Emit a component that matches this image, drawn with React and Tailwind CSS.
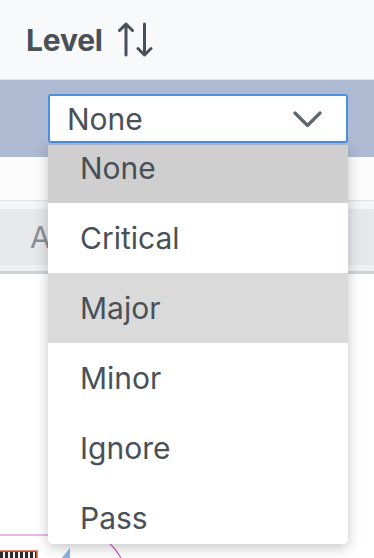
import React from "react";

const options = ["None", "Critical", "Major", "Minor", "Ignore", "Pass"];

export default function App() {
  return (
    <div
      className="relative w-[374px] h-[558px] overflow-hidden bg-white text-[#495057]"
      style={{ fontFamily: "Inter, 'Open Sans', sans-serif" }}
    >
      {/* header */}
      <div className="h-[80px] bg-[#f8f9fa] flex items-center pl-[26px] gap-[15px] border-b border-[#dee2e6]">
        <span className="text-[30px] font-bold leading-none tracking-[-0.2px]">Level</span>
        <svg width="36" height="36" viewBox="0 0 36 36" fill="none" stroke="#495057" strokeWidth="3" strokeLinecap="round" strokeLinejoin="round" className="-mt-[2px]">
          <path d="M8 3v31M1.5 9.5 8 3l6.5 6.5" />
          <path d="M26.5 3v31M20 27.5l6.5 6.5 6.5-6.5" />
        </svg>
      </div>
      {/* filter row */}
      <div className="h-[77px] bg-[#aeb9d2] pl-[48px] pt-[14px]">
        <div className="w-[300px] h-[49px] bg-white border-2 border-[#4a90e2] rounded-[3px] flex items-center justify-between pl-[17px] pr-[24px]">
          <span className="text-[30px] leading-none">None</span>
          <svg width="29" height="16" viewBox="0 0 29 16" fill="none" stroke="#5f666d" strokeWidth="3.2" strokeLinecap="round" strokeLinejoin="round">
            <path d="M2 2l12.5 12.5L27 2" />
          </svg>
        </div>
      </div>
      {/* table rows */}
      <div className="h-[44px] bg-[#fcfcfc] border-b border-[#dee2e6]" />
      <div className="h-[8px] bg-[#f4f5f7]" />
      <div className="h-[56px] bg-[#e6e8ec] flex items-center pl-[30px]">
        <span className="text-[30px] text-[#8a8f96] leading-none">A</span>
      </div>
      <div className="h-[6px] bg-[#eef0f2]" />
      <div className="h-[3px] bg-[#ced2d9]" />

      {/* canvas fragments at the bottom */}
      <svg className="absolute left-0 top-[520px]" width="374" height="38" viewBox="0 0 374 38">
        <line x1="0" y1="15" x2="200" y2="15" stroke="#d86fc8" strokeWidth="1.2" />
        <path d="M110 24 Q117 30 123 42" stroke="#c85bb5" strokeWidth="1.2" fill="none" />
        <rect x="-1" y="31" width="38" height="10" fill="#2b2b2b" stroke="#e0643a" strokeWidth="1.5" />
        {[3, 8, 13, 18, 23, 28, 33].map((x) => (
          <rect key={x} x={x} y="32" width="2" height="8" fill="#f2f2f2" />
        ))}
        <polygon points="70,28 70,40 60,40" fill="#8fb0e8" />
      </svg>

      {/* dropdown list */}
      <div className="absolute left-[48px] top-[145px] w-[300px] h-[399px] overflow-hidden bg-white rounded-b-[5px] shadow-[0_4px_14px_rgba(0,0,0,0.22)]">
        <div className="-mt-[12px]">
          {options.map((o, i) => (
            <div
              key={o}
              className={
                "h-[70px] flex items-center pl-[32px] text-[30px] leading-none " +
                (i === 0 ? "bg-[#cfcfcf]" : i === 2 ? "bg-[#dadada]" : "bg-white")
              }
            >
              {o}
            </div>
          ))}
        </div>
      </div>
    </div>
  );
}
